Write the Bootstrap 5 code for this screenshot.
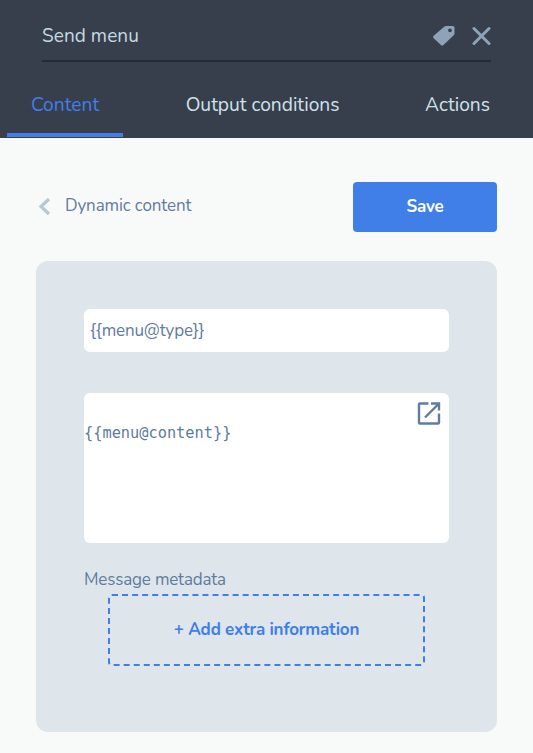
<!DOCTYPE html>
<html lang="en">
<head>
<meta charset="utf-8">
<meta name="viewport" content="width=device-width, initial-scale=1">
<title>Send menu</title>
<link rel="stylesheet" href="https://cdn.jsdelivr.net/npm/bootstrap@5.3.0/dist/css/bootstrap.min.css">
<style>
body{font-family:Nunito,Lato,sans-serif;background:#f8faf9;color:#5f7b9f;font-size:17px;line-height:24px;min-height:753px}
svg{display:block;flex:none}
.top-panel{background:#373f4d;height:138px;color:#c5d9e0;font-size:19.2px}
.title-row{height:62px;margin:0 42px;border-bottom:2px solid #252b36;padding-top:11px}
.title-text{padding-top:13px;font-size:19px;letter-spacing:.05px}
.tabs-row{height:76px;padding:0 7px}
.tabs-row .nav-link{color:#d0e2e9;padding:31px 0 0;height:75px;border-bottom:4px solid transparent;border-radius:0}
.tabs-row .nav-link.active{color:#417ee9;border-color:#417ee9;width:116px;background:none}
.tab-output{margin-right:23px}
.tab-actions{margin-right:36px}
.main-area{padding:44px 36px 0}
.action-row{height:50px;margin-bottom:29px}
.back-link{color:#5f7b9f;letter-spacing:-.12px}
.back-link span{padding-bottom:2px}
.save-btn{width:144px;height:50px;background:#407ee8;border:0;border-radius:4px;color:#fff;font-size:17px;font-weight:700;letter-spacing:-.2px}
.form-panel{height:471px;background:#dee6ec;border-radius:12px;padding:48px}
.type-input{height:43px;border:0;border-radius:6px;color:#5f7b9f;padding:0 6px;font-size:17px;letter-spacing:-.16px;margin-bottom:41px}
.code-box{height:150px;background:#fff;border-radius:6px;padding:8px 8px 0 0}
.code-text{font-family:"DejaVu Sans Mono",monospace;font-size:15.3px;line-height:20px;margin-top:-2px}
.meta-label{margin-top:25px;height:26px;letter-spacing:-.18px}
.extra-btn{margin:0 24px;height:72px;border:2px dashed #407ee8;border-radius:4px;color:#407ee8;font-weight:700;font-size:17px;letter-spacing:-.18px}
</style>
</head>
<body>
<header class="top-panel">
  <div class="title-row d-flex justify-content-between">
    <span class="title-text">Send menu</span>
    <div class="d-flex align-items-center">
      <svg width="22" height="20" viewBox="0 0 22 20" class="me-3"><path fill="#8fa3b8" fill-rule="evenodd" d="M11.500.6Q12.200 0 13 0h6.500Q21.500 0 21.500 2v5.500q0 1-.8 1.700L10.500 19q-1.300 1.200-2.600 0L.7 12.200q-1.200-1.200 0-2.400zM17 2.400a1.900 1.900 0 1 0 0 3.800 1.900 1.900 0 0 0 0-3.800z"/></svg>
      <svg width="20" height="20" viewBox="0 0 20 20"><path d="M3 2.500l15 15m0-15l-15 15" stroke="#8fa3b8" stroke-width="3" stroke-linecap="round"/></svg>
    </div>
  </div>
  <nav class="tabs-row nav justify-content-between flex-nowrap">
    <a class="nav-link active text-center" href="#">Content</a>
    <a class="nav-link tab-output" href="#">Output conditions</a>
    <a class="nav-link tab-actions" href="#">Actions</a>
  </nav>
</header>
<main class="main-area">
  <div class="action-row d-flex align-items-center justify-content-between">
    <a class="back-link d-flex align-items-center text-decoration-none" href="#">
      <svg width="29" height="18" viewBox="0 0 29 18"><path d="M13 1L5 8.500l8 7.500" fill="none" stroke="#b4c9d4" stroke-width="3.200"/></svg>
      <span class="back-text">Dynamic content</span>
    </a>
    <button class="btn save-btn" type="button"><span class="save-text">Save</span></button>
  </div>
  <section class="form-panel">
    <input class="form-control type-input" value="{{menu@type}}" aria-label="Type">
    <div class="code-box">
      <svg class="ms-auto" width="24" height="24" viewBox="0 0 24 24"><path d="M11.500 2.500H3Q2 2.500 2 3.500v18q0 1 1 1h18q1 0 1-1V12.500M14 2.500h8v7M22 2.500L8 16.500" fill="none" stroke="#607d9f" stroke-width="2.400"/></svg>
      <div class="code-text">{{menu@content}}</div>
    </div>
    <div class="meta-label"><span>Message metadata</span></div>
    <div class="d-flex"><button class="btn extra-btn flex-fill" type="button"><span class="extra-text">+ Add extra information</span></button></div>
  </section>
</main>
<script src="https://cdn.jsdelivr.net/npm/bootstrap@5.3.0/dist/js/bootstrap.bundle.min.js"></script>
</body>
</html>
